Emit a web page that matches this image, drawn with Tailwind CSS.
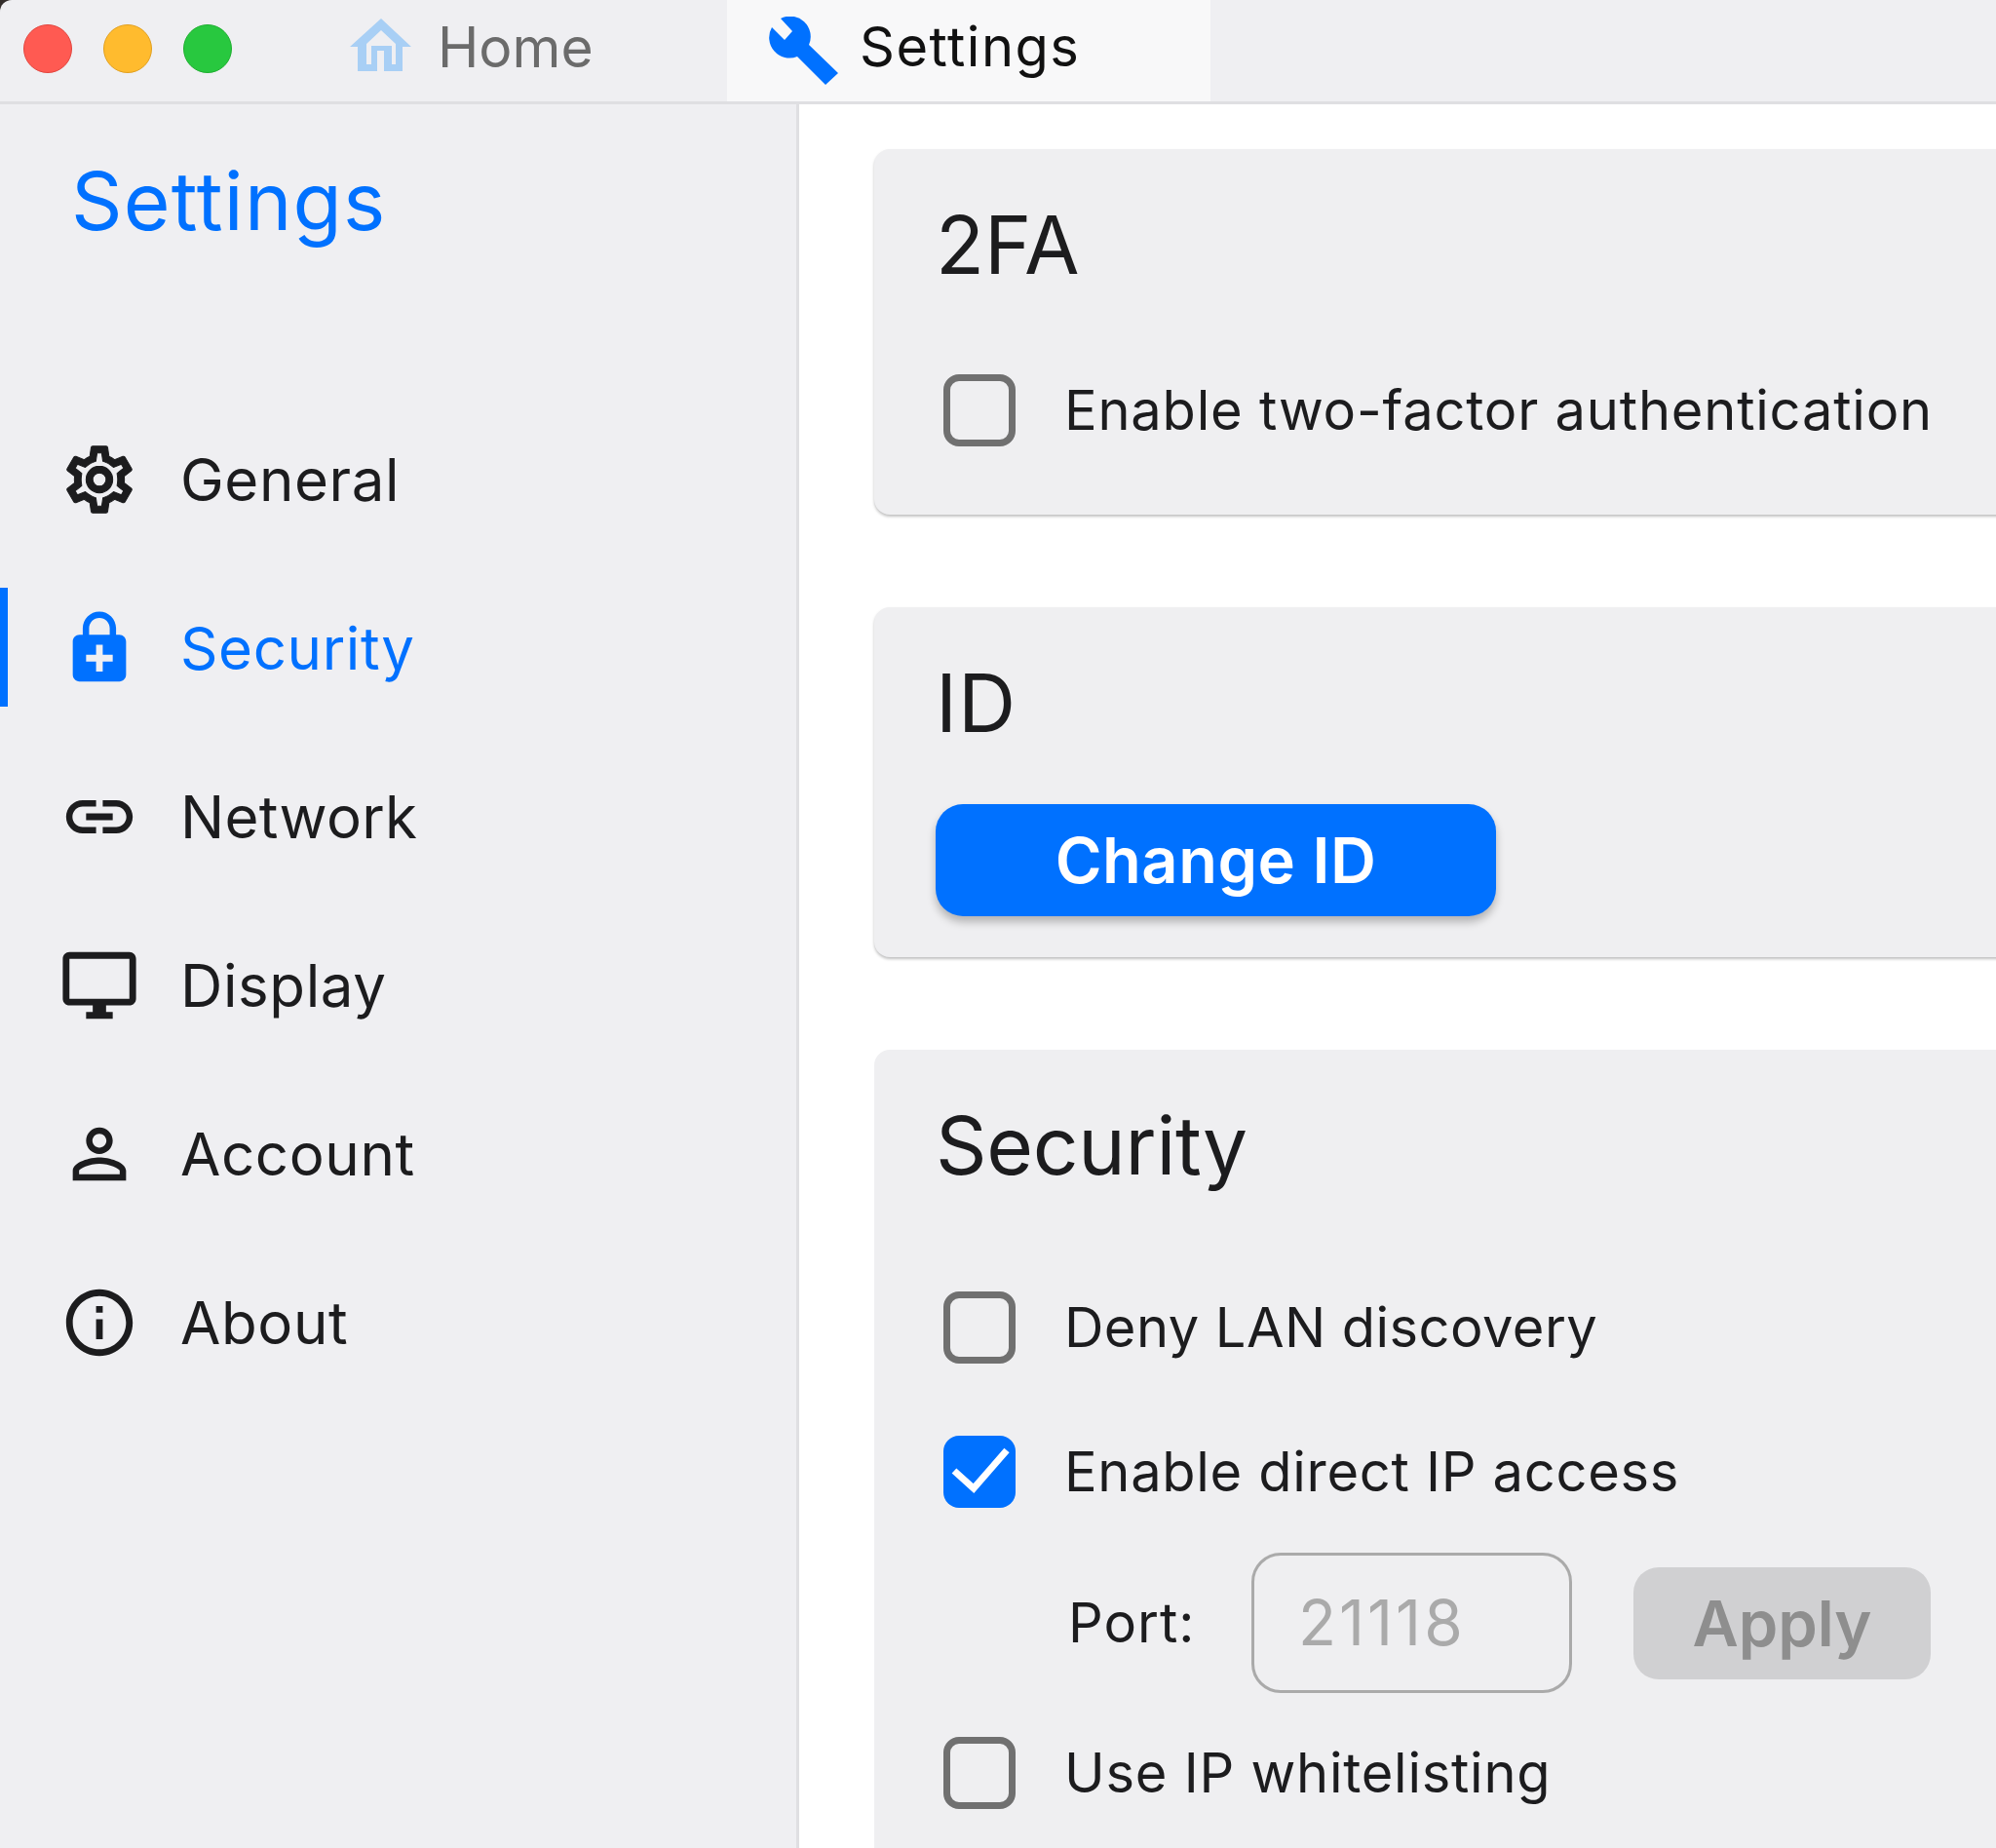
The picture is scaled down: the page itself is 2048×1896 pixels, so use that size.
<!doctype html>
<html>
<head>
<meta charset="utf-8">
<script src="https://cdn.jsdelivr.net/npm/@tailwindcss/browser@4"></script>
</head>
<body class="w-[2048px] h-[1896px] overflow-hidden bg-[#332d2b] font-['Inter',sans-serif] text-[#1c1c1e]">
<header class="h-[107px] bg-[#efeff2] border-b-[3px] border-[#dfdfe2] rounded-tl-[12px] flex">
  <div class="flex gap-[32px] pl-[24px] pt-[25px] w-[359px]">
    <span class="w-[50px] h-[50px] rounded-full bg-[#ff5a52] border border-[#e2453e]"></span>
    <span class="w-[50px] h-[50px] rounded-full bg-[#ffbb2e] border border-[#e1a020]"></span>
    <span class="w-[50px] h-[50px] rounded-full bg-[#28c83f] border border-[#1faf30]"></span>
  </div>
  <div class="w-[387px] flex items-center">
    <svg class="w-[63px] h-[54px] mb-[13px]" viewBox="359 18 63 54"><path fill="#a8cff5" fill-rule="evenodd" d="M391 18 422 47H413V72H367V47H359ZM391 30 376 44V65H381V46H402V65H406V44ZM387 51V72H394V51Z"/></svg>
    <span class="ml-[27px] text-[57px] leading-none text-[#6b6b6b] mb-[8px]">Home</span>
  </div>
  <div class="w-[496px] bg-[#f8f8f9] flex items-center pl-[43px]">
    <svg class="w-[71px] h-[70px]" viewBox="789 13 71 70"><path fill="#0071ff" d="M801 15A21 21 0 0 1 830 42L860 71 847 83 818 54A21 21 0 0 1 792 24L805 37 813 28Z"/></svg>
    <span class="ml-[22px] text-[56px] tracking-[1.5px] leading-none text-[#111] mb-[8px]">Settings</span>
  </div>
</header>
<div class="flex h-[1789px] bg-white">
  <aside class="w-[820px] shrink-0 bg-[#efeff2] border-r-[3px] border-[#dfdfe2]">
    <h1 class="pl-[73px] pt-[56px] h-[298px] text-[82px] tracking-[1.2px] leading-[88px] text-[#0071ff]">Settings</h1>
    <nav class="flex flex-col text-[60px] tracking-[0.6px] leading-none">
      <a class="h-[173px] flex items-center pl-[61px]">
        <svg class="w-[82px] h-[82px] shrink-0 fill-[#1c1c1e] stroke-[#1c1c1e] stroke-[0.3px]" viewBox="0 0 24 24"><path d="M19.43 12.98c.04-.32.07-.64.07-.98 0-.34-.03-.66-.07-.98l2.11-1.65c.19-.15.24-.42.12-.64l-2-3.46c-.09-.16-.26-.25-.44-.25-.06 0-.12.01-.17.03l-2.49 1c-.52-.4-1.08-.73-1.69-.98l-.38-2.65C14.46 2.18 14.25 2 14 2h-4c-.25 0-.46.18-.49.42l-.38 2.65c-.61.25-1.17.59-1.69.98l-2.49-1c-.06-.02-.12-.03-.18-.03-.17 0-.34.09-.43.25l-2 3.46c-.13.22-.07.49.12.64l2.11 1.65c-.04.32-.07.65-.07.98 0 .33.03.66.07.98l-2.11 1.65c-.19.15-.24.42-.12.64l2 3.46c.09.16.26.25.44.25.06 0 .12-.01.17-.03l2.49-1c.52.4 1.08.73 1.69.98l.38 2.65c.03.24.24.42.49.42h4c.25 0 .46-.18.49-.42l.38-2.65c.61-.25 1.17-.59 1.69-.98l2.49 1c.06.02.12.03.18.03.17 0 .34-.09.43-.25l2-3.46c.12-.22.07-.49-.12-.64l-2.11-1.65zm-1.98-1.71c.04.31.05.52.05.73 0 .21-.02.43-.05.73l-.14 1.13.89.7 1.08.84-.7 1.21-1.27-.51-1.04-.42-.9.68c-.43.32-.84.56-1.25.73l-1.06.43-.16 1.13-.2 1.35h-1.4l-.19-1.35-.16-1.13-1.06-.43c-.43-.18-.83-.41-1.23-.71l-.91-.7-1.06.43-1.27.51-.7-1.21 1.08-.84.89-.7-.14-1.13c-.03-.31-.05-.54-.05-.74s.02-.43.05-.73l.14-1.13-.89-.7-1.08-.84.7-1.21 1.27.51 1.04.42.9-.68c.43-.32.84-.56 1.25-.73l1.06-.43.16-1.13.2-1.35h1.39l.19 1.35.16 1.13 1.06.43c.43.18.83.41 1.23.71l.91.7 1.06-.43 1.27-.51.7 1.21-1.07.85-.89.7.14 1.13zM12 8c-2.21 0-4 1.79-4 4s1.79 4 4 4 4-1.79 4-4-1.79-4-4-4zm0 6c-1.1 0-2-.9-2-2s.9-2 2-2 2 .9 2 2-.9 2-2 2z"/></svg>
        <span class="ml-[42px]">General</span>
      </a>
      <a class="h-[173px] flex items-center pl-[61px] text-[#0071ff] relative">
        <span class="absolute left-0 top-[25px] w-[8px] h-[122px] bg-[#0071ff]"></span>
        <svg class="w-[82px] h-[82px] shrink-0 fill-[#0071ff]" viewBox="0 0 24 24"><path d="M18 8h-1V6c0-2.76-2.24-5-5-5S7 3.24 7 6v2H6c-1.1 0-2 .9-2 2v10c0 1.1.9 2 2 2h12c1.1 0 2-.9 2-2V10c0-1.1-.9-2-2-2zM8.9 6c0-1.71 1.39-3.1 3.1-3.1s3.1 1.39 3.1 3.1v2H8.9V6zM16 16h-3v3h-2v-3H8v-2h3v-3h2v3h3v2z"/></svg>
        <span class="ml-[42px]">Security</span>
      </a>
      <a class="h-[173px] flex items-center pl-[61px]">
        <svg class="w-[82px] h-[82px] shrink-0 fill-[#1c1c1e]" viewBox="0 0 24 24"><path d="M3.9 12c0-1.71 1.39-3.1 3.1-3.1h4V7H7c-2.76 0-5 2.24-5 5s2.24 5 5 5h4v-1.9H7c-1.71 0-3.1-1.39-3.1-3.1zM8 13h8v-2H8v2zm9-6h-4v1.9h4c1.71 0 3.1 1.39 3.1 3.1s-1.39 3.1-3.1 3.1h-4V17h4c2.76 0 5-2.24 5-5s-2.24-5-5-5z"/></svg>
        <span class="ml-[42px] tracking-[0.3px]">Network</span>
      </a>
      <a class="h-[173px] flex items-center pl-[61px]">
        <svg class="w-[82px] h-[82px] shrink-0 fill-[#1c1c1e]" viewBox="0 0 24 24"><path d="M21 2H3c-1.1 0-2 .9-2 2v12c0 1.1.9 2 2 2h7v2H8v2h8v-2h-2v-2h7c1.1 0 2-.9 2-2V4c0-1.1-.9-2-2-2zm0 14H3V4h18v12z"/></svg>
        <span class="ml-[42px]">Display</span>
      </a>
      <a class="h-[173px] flex items-center pl-[61px]">
        <svg class="w-[82px] h-[82px] shrink-0 fill-[#1c1c1e]" viewBox="0 0 24 24"><path d="M12 5.9c1.16 0 2.1.94 2.1 2.1s-.94 2.1-2.1 2.1S9.9 9.16 9.9 8s.94-2.1 2.1-2.1m0 9c2.97 0 6.1 1.46 6.1 2.1v1.1H5.9V17c0-.64 3.13-2.1 6.1-2.1M12 4C9.79 4 8 5.79 8 8s1.79 4 4 4 4-1.79 4-4-1.79-4-4-4zm0 9c-2.67 0-8 1.34-8 4v3h16v-3c0-2.66-5.33-4-8-4z"/></svg>
        <span class="ml-[42px]">Account</span>
      </a>
      <a class="h-[173px] flex items-center pl-[61px]">
        <svg class="w-[82px] h-[82px] shrink-0 fill-[#1c1c1e]" viewBox="0 0 24 24"><path d="M11 7h2v2h-2zm0 4h2v6h-2zm1-9C6.48 2 2 6.48 2 12s4.48 10 10 10 10-4.48 10-10S17.52 2 12 2zm0 18c-4.41 0-8-3.59-8-8s3.59-8 8-8 8 3.59 8 8-3.59 8-8 8z"/></svg>
        <span class="ml-[42px]">About</span>
      </a>
    </nav>
  </aside>
  <main class="flex-1 min-w-0 overflow-hidden pt-[46px] pl-[76px] flex flex-col gap-[95px]">
    <section class="w-[1300px] ml-px shrink-0 bg-[#efeff1] rounded-[16px] shadow-[0_2px_3px_rgba(0,0,0,0.25)] pt-[58px] pl-[63px] pb-[70px]">
      <h2 class="h-[80px] text-[82px] leading-[82px] mb-[93px]">2FA</h2>
      <label class="flex items-center h-[74px] ml-[8px]">
        <span class="w-[74px] h-[74px] rounded-[16px] border-[7px] border-[#707070]"></span>
        <span class="ml-[50px] text-[56px] tracking-[0.8px] leading-none">Enable two-factor authentication</span>
      </label>
    </section>
    <section class="w-[1300px] ml-px shrink-0 bg-[#efeff1] rounded-[16px] shadow-[0_2px_3px_rgba(0,0,0,0.25)] pt-[58px] pl-[63px] pb-[42px]">
      <h2 class="h-[80px] text-[82px] tracking-[1px] leading-[82px] mb-[64px]">ID</h2>
      <button class="w-[575px] h-[115px] rounded-[28px] bg-[#0071ff] text-white text-[65px] tracking-[0.5px] font-semibold leading-none shadow-[0_6px_8px_rgba(0,0,0,0.25)]">Change ID</button>
    </section>
    <section class="w-[1300px] ml-px shrink-0 bg-[#efeff1] rounded-t-[16px] pt-[58px] pl-[63px] pb-[200px]">
      <h2 class="h-[80px] text-[82px] tracking-[-0.3px] leading-[82px] mb-[110px]">Security</h2>
      <label class="flex items-center h-[74px] ml-[8px]">
        <span class="w-[74px] h-[74px] rounded-[16px] border-[7px] border-[#707070]"></span>
        <span class="ml-[50px] text-[56px] tracking-[0.45px] leading-none">Deny LAN discovery</span>
      </label>
      <label class="flex items-center h-[74px] ml-[8px] mt-[74px]">
        <span class="w-[74px] h-[74px] rounded-[16px] bg-[#0071ff] flex items-center justify-center">
          <svg class="w-[74px] h-[74px]" viewBox="0 0 74 74"><path d="M11 36 31 54 65 15" fill="none" stroke="#fff" stroke-width="7"/></svg>
        </span>
        <span class="ml-[50px] text-[56px] tracking-[0.7px] leading-none">Enable direct IP access</span>
      </label>
      <div class="flex items-center h-[144px] mt-[46px] pl-[136px]">
        <span class="w-[188px] text-[56px] tracking-[1px] leading-none">Port:</span>
        <span class="w-[329px] h-[144px] rounded-[30px] border-[3px] border-[#aaaaaa] pl-[45px] flex items-center text-[64px] tracking-[3px] leading-none text-[#aaaaaa]">21118</span>
        <button class="ml-[63px] w-[305px] h-[115px] rounded-[26px] bg-[#d0d0d2] text-[#8e8e8e] text-[65px] font-semibold leading-none">Apply</button>
      </div>
      <label class="flex items-center h-[74px] ml-[8px] mt-[45px]">
        <span class="w-[74px] h-[74px] rounded-[16px] border-[7px] border-[#707070]"></span>
        <span class="ml-[50px] text-[56px] tracking-[0.75px] leading-none">Use IP whitelisting</span>
      </label>
    </section>
  </main>
</div>
</body>
</html>
